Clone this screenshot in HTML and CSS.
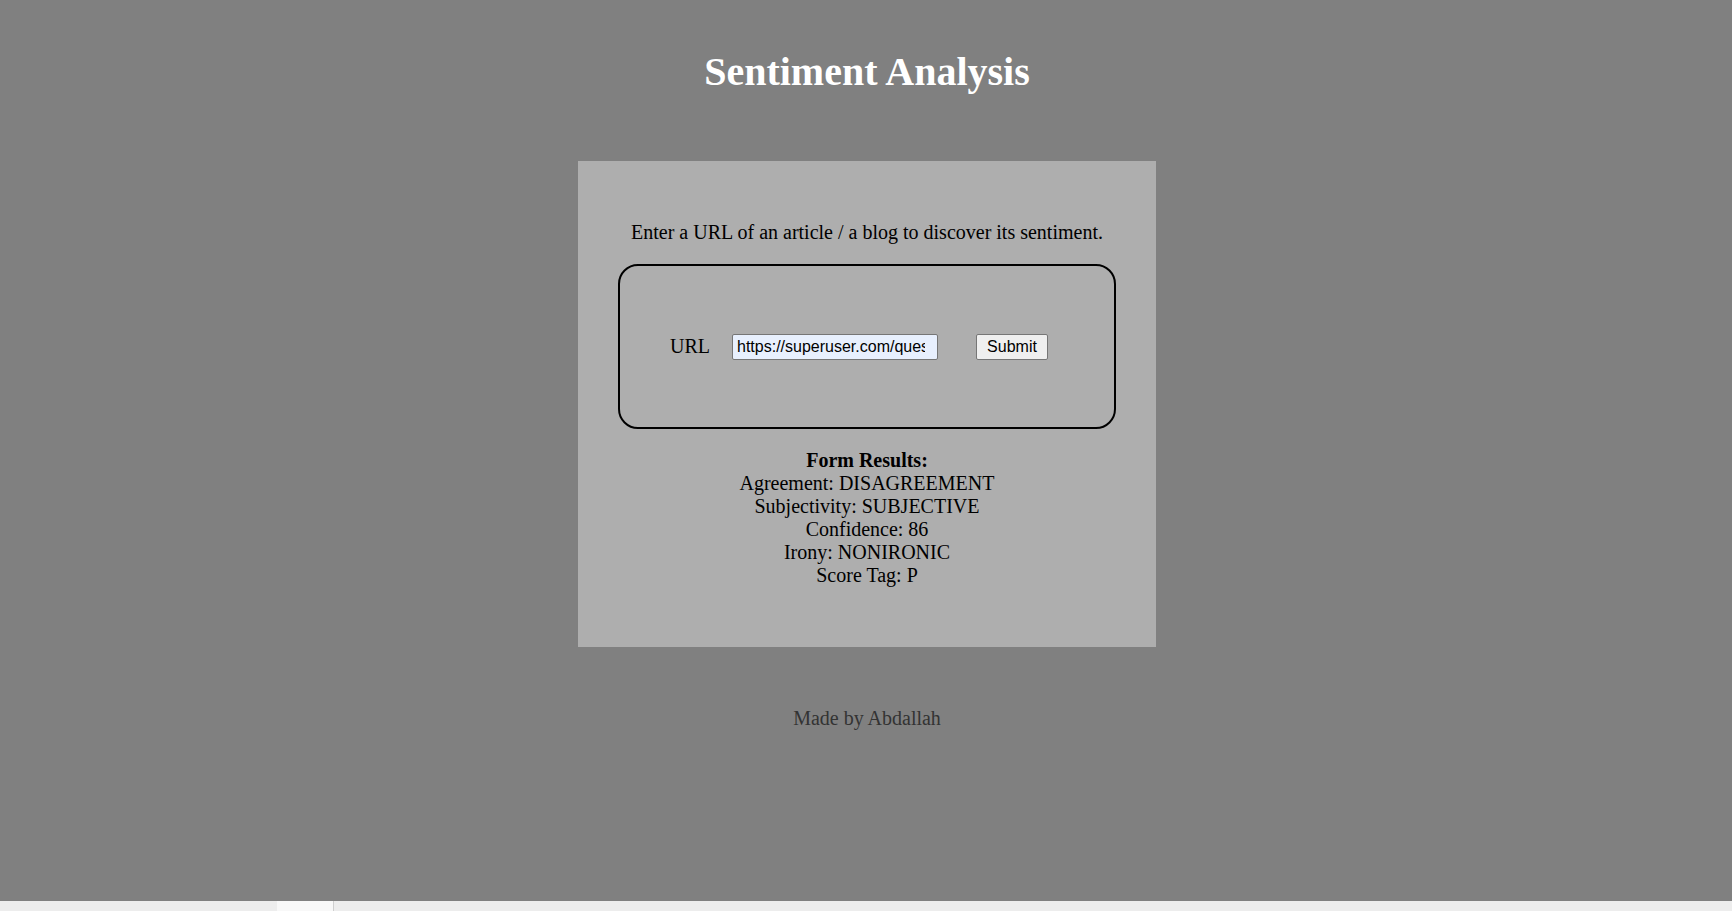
FILE: index.html
```html
<!DOCTYPE html>
<html lang="en">
<head>
<meta charset="utf-8">
<title>Sentiment Analysis</title>
<link rel="stylesheet" href="styles.css">
</head>
<body>
<h1 class="title">Sentiment Analysis</h1>
<main class="card">
  <p class="intro">Enter a URL of an article / a blog to discover its sentiment.</p>
  <form class="url-form">
    <label class="url-label" for="url">URL</label>
    <input class="url-input" id="url" type="text" value="https://superuser.com/questions/">
    <button class="submit-btn" type="button">Submit</button>
  </form>
  <section class="results">
    <div class="results-title">Form Results:</div>
    <div>Agreement: DISAGREEMENT</div>
    <div>Subjectivity: SUBJECTIVE</div>
    <div>Confidence: 86</div>
    <div>Irony: NONIRONIC</div>
    <div>Score Tag: P</div>
  </section>
</main>
<footer class="footer">Made by Abdallah</footer>
<div class="hscroll"><div class="hscroll-thumb"></div></div>
</body>
</html>
```
FILE: styles.css
```css
html, body {
  margin: 0;
  padding: 0;
}
body {
  background: #808080;
  font-family: "Liberation Serif", "Times New Roman", serif;
  font-size: 20px;
  line-height: 23px;
  color: #000;
  min-height: 911px;
  padding-left: 2px;
}
.title {
  margin: 49px 0 0;
  font-size: 40px;
  line-height: 46px;
  font-weight: bold;
  color: #fff;
  text-align: center;
}
.card {
  display: block;
  width: 578px;
  box-sizing: border-box;
  margin: 66px auto 0;
  padding: 40px;
  background: #aeaeae;
}
.intro {
  margin: 20px 0 0;
  text-align: center;
}
.url-form {
  margin: 20px 0 0;
  height: 165px;
  box-sizing: border-box;
  border: 2px solid #000;
  border-radius: 20px;
  display: flex;
  align-items: center;
  padding-left: 50px;
}
.url-label {
  margin-right: 22px;
}
.url-input {
  width: 206px;
  height: 26px;
  box-sizing: border-box;
  border: 1px solid #767676;
  border-radius: 2px;
  background: #e8f0fe;
  padding: 0 12px 0 4px;
  font-family: "Liberation Sans", Arial, sans-serif;
  font-size: 16px;
  color: #000;
  margin: 0 38px 0 0;
}
.submit-btn {
  width: 72px;
  height: 26px;
  box-sizing: border-box;
  border: 1px solid #767676;
  border-radius: 2px;
  background: #efefef;
  padding: 0;
  font-family: "Liberation Sans", Arial, sans-serif;
  font-size: 16px;
  color: #000;
  margin: 0;
}
.results {
  margin: 20px 0 20px;
  text-align: center;
}
.results-title {
  font-weight: bold;
}
.footer {
  margin-top: 60px;
  text-align: center;
  color: #333;
}
.hscroll {
  position: fixed;
  left: 0;
  right: 0;
  bottom: 0;
  height: 10px;
  background: #ededed;
}
.hscroll-thumb {
  position: absolute;
  left: 277px;
  top: 0;
  width: 56px;
  height: 10px;
  background: #f8f8f8;
  border-right: 1px solid #cfcfcf;
}
```
